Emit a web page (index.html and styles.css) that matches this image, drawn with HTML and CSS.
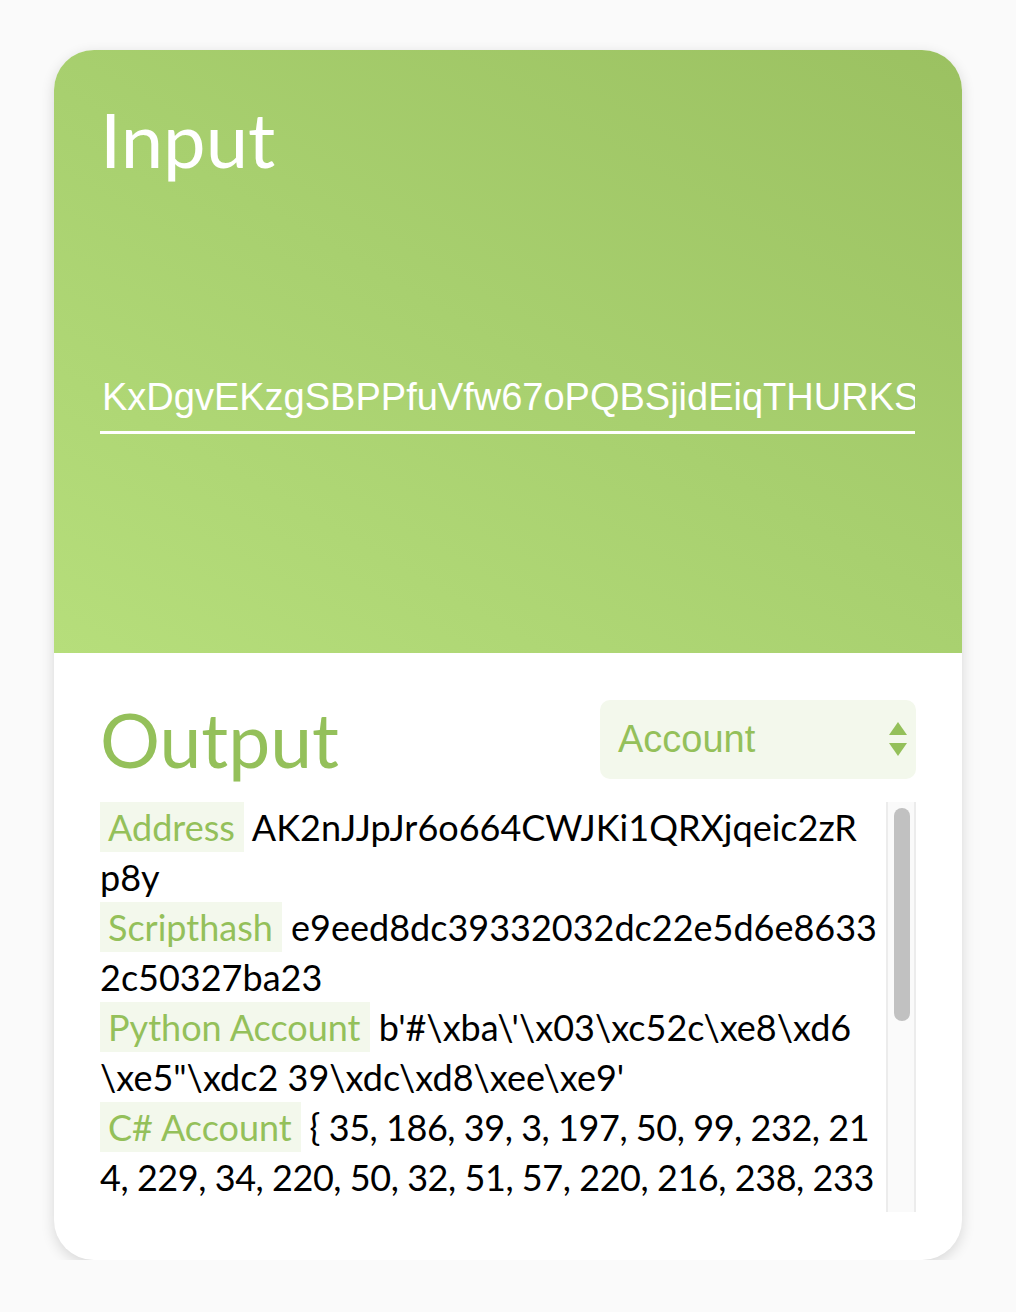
FILE: index.html
```
<!DOCTYPE html>
<html>
<head>
<meta charset="utf-8">
<link rel="stylesheet" href="styles.css">
</head>
<body>
<div class="card">
  <section class="input-panel">
    <h1 class="panel-title">Input</h1>
    <input class="key-input" type="text" value="KxDgvEKzgSBPPfuVfw67oPQBSjidEiqTHURKSBsGUSHmXb2ZvDxu">
  </section>
  <section class="output-panel">
    <div class="output-head">
      <h2 class="output-title">Output</h2>
      <div class="select">
        <span class="select-label">Account</span>
        <svg class="select-arrows" width="20" height="36" viewBox="0 0 20 36"><path d="M10 1 L19 14 L1 14 Z" fill="#94c05a"/><path d="M1 22 L19 22 L10 35 Z" fill="#94c05a"/></svg>
      </div>
    </div>
    <div class="results-box">
      <div class="results">
        <div class="row"><span class="tag">Address</span> AK2nJJpJr6o664CWJKi1QRXjqeic2zR<br>p8y</div>
        <div class="row"><span class="tag">Scripthash</span> e9eed8dc39332032dc22e5d6e8633<br>2c50327ba23</div>
        <div class="row"><span class="tag">Python Account</span> b'#\xba\'\x03\xc52c\xe8\xd6<br>\xe5"\xdc2 39\xdc\xd8\xee\xe9'</div>
        <div class="row row-bytes"><span class="tag">C# Account</span> { 35, 186, 39, 3, 197, 50, 99, 232, 21<br>4, 229, 34, 220, 50, 32, 51, 57, 220, 216, 238, 233<br>}</div>
        <div class="row"><span class="tag">Hex Account</span> 23ba2703c53263e8d6e522dc3220333<br>9dcd8eee9</div>
      </div>
      <div class="scrollbar"><div class="thumb"></div></div>
    </div>
  </section>
</div>
</body>
</html>
```
FILE: styles.css
```
* { box-sizing: border-box; }
html, body { margin: 0; padding: 0; }
body {
  background: #fafafa;
  font-family: "Lato", "Open Sans", sans-serif;
}
.card {
  width: 908px;
  height: 1210px;
  margin: 50px 0 0 54px;
  border-radius: 40px;
  overflow: hidden;
  background: #fff;
  box-shadow: 0 4px 14px rgba(0,0,0,0.14);
}
.input-panel {
  height: 603px;
  padding: 44px 46px 0 46px;
  background: linear-gradient(30deg, #b6de7b 0%, #a8d06f 50%, #9bc161 100%);
}
.panel-title {
  margin: 0;
  font-weight: 400;
  font-size: 76px;
  line-height: 90px;
  color: #fff;
}
.key-input {
  display: block;
  margin-top: 192px;
  width: 815px;
  padding: 0 0 12px 2px;
  border: 0;
  border-bottom: 3px solid #fff;
  background: transparent;
  color: #fff;
  font-family: "Liberation Sans", Arial, sans-serif;
  font-size: 38px;
  outline: none;
}
.output-panel {
  padding: 46px 46px 0 46px;
}
.output-head {
  display: flex;
  justify-content: space-between;
  align-items: center;
  height: 80px;
}
.output-title {
  margin: 0;
  font-weight: 400;
  font-size: 75px;
  line-height: 80px;
  color: #94c05a;
}
.select {
  width: 316px;
  height: 79px;
  border-radius: 10px;
  background: #f3f8ec;
  display: flex;
  align-items: center;
  justify-content: space-between;
  padding: 0 8px 0 18px;
}
.select-label {
  font-family: "Liberation Sans", Arial, sans-serif;
  font-size: 38px;
  color: #94c05a;
}
.results-box {
  margin-top: 23px;
  height: 410px;
  display: flex;
}
.results {
  flex: 1;
  overflow: hidden;
  font-size: 36px;
  line-height: 50px;
  color: #000;
}
.scrollbar {
  width: 30px;
  flex: none;
  background: #fafafa;
  border-left: 2px solid #ececec;
  border-right: 2px solid #ececec;
  padding: 6px 4px 0 6px;
}
.thumb {
  height: 213px;
  border-radius: 8px;
  background: #c1c1c1;
}
.row { white-space: nowrap; }
.row-bytes { letter-spacing: -0.45px; }
.tag {
  display: inline-block;
  background: #f3f8ec;
  color: #94c05a;
  padding: 0 9px 0 8px;
  line-height: 50px;
  letter-spacing: 0;
}
```
